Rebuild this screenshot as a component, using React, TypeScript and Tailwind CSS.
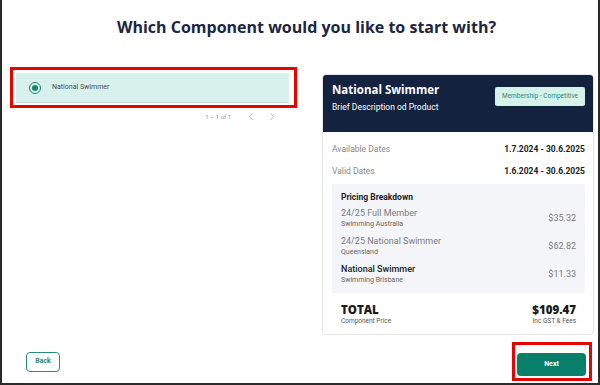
import React from "react";

const heading = { fontFamily: '"Open Sans", "Noto Sans", sans-serif' };
const body = { fontFamily: 'Roboto, "Liberation Sans", sans-serif' };

const items = [
  { name: "24/25 Full Member", org: "Swimming Australia", price: "$35.32", dark: false },
  { name: "24/25 National Swimmer", org: "Queensland", price: "$62.82", dark: false },
  { name: "National Swimmer", org: "Swimming Brisbane", price: "$11.33", dark: true },
];

const Chevron = ({ left }: { left?: boolean }) => (
  <svg width="6" height="9" viewBox="0 0 6 9" fill="none">
    <path
      d={left ? "M4.5 1 L1.5 4.5 L4.5 8" : "M1.5 1 L4.5 4.5 L1.5 8"}
      stroke="#b5b5b5"
      strokeWidth="0.9"
    />
  </svg>
);

export default function App() {
  return (
    <div
      className="w-[600px] h-[385px] bg-white border-l-2 border-r-2 border-b-2 border-[#2b2b2b] flex flex-col overflow-hidden"
      style={body}
    >
      {/* title */}
      <h1
        className="mt-[16px] pl-[13px] text-center text-[16px] leading-[22px] font-bold text-[#1b2640]"
        style={heading}
      >
        Which Component would you like to start with?
      </h1>

      <div className="mt-[29px] flex items-start">
        {/* component list */}
        <div className="ml-[8px] w-[287px] flex flex-col">
          <div className="border-[3px] border-[#e10600] pt-[3px] pb-[2px] pl-[3px] pr-[5px]">
            <div className="h-[30px] bg-[#d9f1ec] border-b border-[#c5d9d4] flex items-center pl-[13px]">
              <span className="w-[12px] h-[12px] rounded-full border-[1.5px] border-[#17876f] flex items-center justify-center">
                <span className="w-[6px] h-[6px] rounded-full bg-[#17876f]" />
              </span>
              <span className="ml-[11px] text-[7px] text-[#4a4a4a]">National Swimmer</span>
            </div>
          </div>
          <div className="mt-[4px] flex items-center justify-end pr-[22px] text-[6px] text-[#9a9a9a]">
            <span>1 – 1 of 1</span>
            <span className="ml-[17px]"><Chevron left /></span>
            <span className="ml-[15px]"><Chevron /></span>
          </div>
        </div>

        {/* product card */}
        <div className="ml-[25px] mt-[7px] w-[272px] rounded-[4px] border border-[#e2e4e8] overflow-hidden">
          <div className="h-[57px] bg-[#13223f] flex justify-between items-start pl-[9px] pr-[8px] pt-[7px]">
            <div>
              <div className="text-[11.5px] leading-[16px] font-bold text-white" style={heading}>
                National Swimmer
              </div>
              <div className="mt-[3px] text-[8.5px] leading-[12px] text-white">Brief Description od Product</div>
            </div>
            <div className="mt-[5px] w-[90px] h-[19px] rounded-[2px] bg-[#d5f2ea] flex items-center justify-center text-[6.5px] text-[#2f8a73]">
              Membership - Competitive
            </div>
          </div>

          <div className="pl-[9px] pr-[8px] pt-[10px] pb-[8px]">
            <div className="flex justify-between text-[8.5px] leading-[14px]">
              <span className="text-[#8a8a8a]">Available Dates</span>
              <span className="font-bold text-[#222]">1.7.2024 - 30.6.2025</span>
            </div>
            <div className="mt-[8px] flex justify-between text-[8.5px] leading-[14px]">
              <span className="text-[#8a8a8a]">Valid Dates</span>
              <span className="font-bold text-[#222]">1.6.2024 - 30.6.2025</span>
            </div>

            <div className="mt-[6px] bg-[#f3f5f8] px-[9px] pt-[7px] pb-[8px]">
              <div className="text-[8.5px] leading-[12px] font-bold text-[#222]">Pricing Breakdown</div>
              <div className="mt-[5px] flex flex-col gap-[7px]">
                {items.map((it) => (
                  <div key={it.name} className="flex justify-between items-center">
                    <div>
                      <div className={`text-[9px] leading-[11px] ${it.dark ? "text-[#222] font-medium" : "text-[#7d7d7d]"}`}>
                        {it.name}
                      </div>
                      <div className="text-[7px] leading-[10px] text-[#666]">{it.org}</div>
                    </div>
                    <span className="text-[9px] text-[#7d7d7d]">{it.price}</span>
                  </div>
                ))}
              </div>
            </div>

            <div className="mt-[10px] px-[9px] flex justify-between items-end">
              <div>
                <div className="text-[11.5px] leading-[14px] font-extrabold text-[#1b1b1b]" style={heading}>
                  TOTAL
                </div>
                <div className="text-[6.5px] leading-[9px] text-[#555]">Component Price</div>
              </div>
              <div className="text-right">
                <div className="text-[11.5px] leading-[14px] font-extrabold text-[#1b1b1b]" style={heading}>
                  $109.47
                </div>
                <div className="text-[6.5px] leading-[9px] text-[#555]">Inc GST &amp; Fees</div>
              </div>
            </div>
          </div>
        </div>
      </div>

      {/* footer */}
      <div className="mt-auto pb-[2px] pl-[24px] pr-[6px] flex justify-between items-center">
        <button className="w-[34px] h-[20px] rounded-[4px] border border-[#2a8a78] text-[7px] font-bold text-[#2a8a78]">
          Back
        </button>
        <div className="border-[3px] border-[#e10600] pt-[4px] pb-[2px] pl-[2px] pr-[3px]">
          <button className="w-[69px] h-[23px] rounded-[4px] bg-[#077f6b] text-[7px] font-bold text-white">
            Next
          </button>
        </div>
      </div>
    </div>
  );
}
